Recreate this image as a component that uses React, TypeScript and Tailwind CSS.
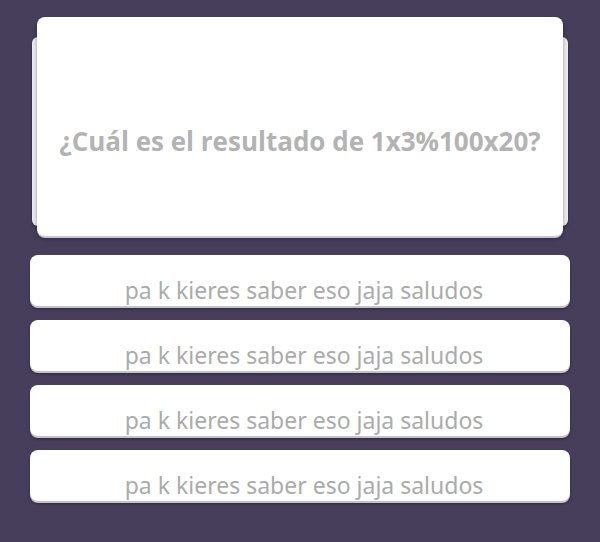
const answers = [
  "pa k kieres saber eso jaja saludos",
  "pa k kieres saber eso jaja saludos",
  "pa k kieres saber eso jaja saludos",
  "pa k kieres saber eso jaja saludos",
];

export default function App() {
  return (
    <div className="w-[600px] h-[542px] bg-[#463e5b] overflow-hidden pt-[17px] px-[30px]">
      {/* question card with a stacked card behind */}
      <div className="relative h-[219px] mx-[2px]">
        <div className="absolute left-0 right-0 top-[20px] bottom-[10px] bg-[#ecebf0] rounded-[6px] shadow-[0_1px_3px_rgba(0,0,0,0.4)]" />
        <div className="absolute left-[5px] right-[5px] top-0 bottom-0 bg-white rounded-[8px] shadow-[0_2px_0_#c9c6d2,0_3px_4px_rgba(0,0,0,0.35)] flex items-center justify-center pt-[30px]">
          <span className="text-[#b3b3b3] font-bold text-[26px] tracking-[0px] font-['Open_Sans',sans-serif]">
            ¿Cuál es el resultado de 1x3%100x20?
          </span>
        </div>
      </div>
      <div className="flex flex-col gap-[14px] mt-[19px]">
        {answers.map((a, i) => (
          <div
            key={i}
            className="h-[51px] bg-white rounded-[8px] shadow-[0_2px_0_#c4c1cc,0_3px_3px_rgba(0,0,0,0.35)] flex items-center justify-center pt-[19px] pl-[8px]"
          >
            <span className="text-[#ababab] text-[23px] leading-none font-['Noto_Sans',sans-serif]">{a}</span>
          </div>
        ))}
      </div>
    </div>
  );
}
